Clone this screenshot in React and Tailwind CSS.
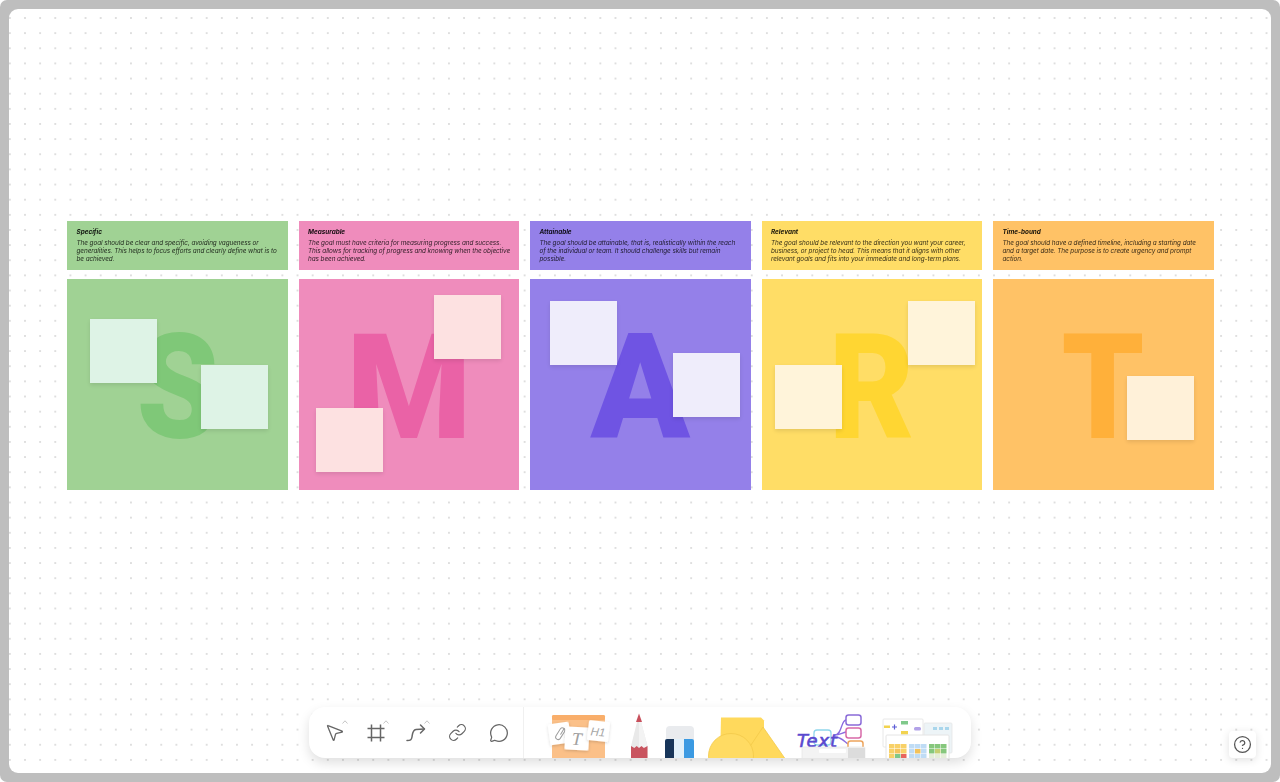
import React from "react";
import { MousePointer2, Link, MessageCircle, CircleHelp } from "lucide-react";

const font = { fontFamily: '"Inter","Liberation Sans",sans-serif' };

const columns = [
  { title: "Specific", lines: ["The goal should be clear and specific, avoiding vagueness or", "generalities. This helps to focus efforts and clearly define what is to", "be achieved."], bg: "bg-[#a0d294]", fg: "text-[#7fc878] scale-x-90", note: "bg-[#def3e6]", letter: "S", notes: ["left-[23px] top-[40px]", "left-[134px] top-[86px]"] },
  { title: "Measurable", lines: ["The goal must have criteria for measuring progress and success.", "This allows for tracking of progress and knowing when the objective", "has been achieved."], bg: "bg-[#ef8cbc]", fg: "text-[#ea62a6] scale-x-[0.98]", note: "bg-[#fde1e1]", letter: "M", notes: ["left-[135.5px] top-[16px]", "left-[17.5px] top-[129px]"] },
  { title: "Attainable", lines: ["The goal should be attainable, that is, realistically within the reach", "of the individual or team. It should challenge skills but remain", "possible."], bg: "bg-[#9480e9]", fg: "text-[#6f54e3] scale-x-100", note: "bg-[#efedfb]", letter: "A", notes: ["left-[20px] top-[22px]", "left-[143px] top-[74px]"] },
  { title: "Relevant", lines: ["The goal should be relevant to the direction you want your career,", "business, or project to head. This means that it aligns with other", "relevant goals and fits into your immediate and long-term plans."], bg: "bg-[#ffdd66]", fg: "text-[#ffd632] scale-x-90", note: "bg-[#fff4da]", letter: "R", notes: ["left-[146.5px] top-[22px]", "left-[13.5px] top-[86px]"] },
  { title: "Time-bound", lines: ["The goal should have a defined timeline, including a starting date", "and a target date. The purpose is to create urgency and prompt", "action."], bg: "bg-[#ffc266]", fg: "text-[#ffb03a] scale-x-90", note: "bg-[#fff1d9]", letter: "T", notes: ["left-[134px] top-[97px]"] },
];

function Caret({ className }) {
  return (
    <svg viewBox="0 0 6 4" className={"absolute w-[6px] h-[4px] " + className} fill="none" stroke="#b5b5b5" strokeWidth="0.8">
      <path d="M0.5 3.5 3 0.8 5.5 3.5" />
    </svg>
  );
}

function Column({ c }) {
  return (
    <div className="w-[220.5px] flex flex-col gap-[9px]">
      <div className={"h-[49px] pl-[9.5px] pt-[6.5px] text-[6.4px] leading-[8px] italic text-black/80 blur-[0.3px] whitespace-nowrap " + c.bg}>
        <div className="font-bold mb-[3px] text-black/90 tracking-[-0.02px]">{c.title}</div>
        {c.lines.map((l) => (
          <div key={l} className="tracking-[-0.07px]">{l}</div>
        ))}
      </div>
      <div className={"relative h-[211px] flex items-center justify-center overflow-hidden " + c.bg}>
        <span className={"text-[146px] leading-none font-black pt-[9px] " + c.fg} style={{ fontFamily: '"Roboto","Liberation Sans",sans-serif' }}>{c.letter}</span>
        {c.notes.map((n) => (
          <div key={n} className={"absolute w-[67px] h-[64px] shadow-[0_2px_4px_rgba(0,0,0,0.1)] " + c.note + " " + n} />
        ))}
      </div>
    </div>
  );
}

function Sticky() {
  return (
    <svg viewBox="545 707 70 51" className="w-[70px] h-[51px] ml-[20px] shrink-0">
      <defs>
        <filter id="cardShadow" x="-30%" y="-30%" width="160%" height="160%">
          <feDropShadow dx="0" dy="1" stdDeviation="1.500" floodColor="#000" floodOpacity="0.18" />
        </filter>
      </defs>
      <rect x="553" y="715" width="53" height="45" rx="1.500" fill="#fbc088" />
      <rect x="553" y="715" width="53" height="5" rx="1.500" fill="#f9ae6a" />
      <g transform="rotate(-8 560 733)" filter="url(#cardShadow)">
        <rect x="550" y="723" width="21" height="21" rx="1.500" fill="#fff" />
      </g>
      <g transform="rotate(-8 560 733)" fill="none" stroke="#9d9d9d" strokeWidth="1" strokeLinecap="round">
        <path d="M556.500 735.500l5.500-6.500a2.500 2.500 0 0 1 3.800 3.200l-5.500 6.500a2.500 2.500 0 0 1-3.800-3.200z" />
        <path d="M561.500 734.500l4-5" />
      </g>
      <g transform="rotate(3 578 738)" filter="url(#cardShadow)">
        <rect x="566" y="727" width="24" height="23" rx="1.500" fill="#fff" />
      </g>
      <text x="578" y="745" textAnchor="middle" fontSize="18" fontFamily="Liberation Serif, serif" fill="#a0a0a0" fontStyle="italic" transform="rotate(3 578 738)">T</text>
      <g transform="rotate(6 599 731)" filter="url(#cardShadow)">
        <rect x="589" y="721" width="21" height="20" rx="1.500" fill="#fff" />
      </g>
      <text x="599" y="736" textAnchor="middle" fontSize="11.500" fontFamily="Liberation Sans, sans-serif" fill="#a5a5a5" fontStyle="italic" transform="rotate(6 599 731)">H1</text>
    </svg>
  );
}

function Pencil() {
  return (
    <svg viewBox="628 707 24 51" className="w-[24px] h-[51px] ml-[13px] shrink-0">
      <path d="M640 714 648.500 746V760H632V746Z" fill="#e9e9e9" />
      <path d="M640 714 648.500 746V760H640Z" fill="#f3f3f3" />
      <path d="M640 713.500 643 722H637Z" fill="#c8505c" />
      <path d="M632 746l3.300 2 2.400-2 2.300 2 2.500-2 2.400 2 3.600-2V760H632Z" fill="#c9545f" />
    </svg>
  );
}

function Eraser() {
  return (
    <svg viewBox="662 707 38 51" className="w-[38px] h-[51px] ml-[10px] shrink-0">
      <path d="M667 730a4 4 0 0 1 4-4h20a4 4 0 0 1 4 4v11h-28z" fill="#e9ebee" />
      <rect x="666" y="739" width="29" height="20" rx="2" fill="#e2f1fa" />
      <path d="M668 739h7v20h-9v-18a2 2 0 0 1 2-2z" fill="#17355a" />
      <path d="M685 739h8a2 2 0 0 1 2 2v18h-10z" fill="#3b9ae2" />
    </svg>
  );
}

function Shapes() {
  return (
    <svg viewBox="706 707 84 51" className="w-[84px] h-[51px] ml-[6px] shrink-0">
      <path d="M722 717.500h40l3 3v40h-44z" fill="#ffd95c" />
      <path d="M764 727 787 760H742Z" fill="#ffd95c" stroke="#f2c94a" strokeWidth="0.8" />
      <circle cx="732" cy="756" r="22.500" fill="#ffdb63" stroke="#f2c94a" strokeWidth="0.8" />
    </svg>
  );
}

function MindMap() {
  return (
    <svg viewBox="795 707 75 51" className="w-[75px] h-[51px] ml-[5px] shrink-0">
      <rect x="815" y="730" width="17" height="15" rx="3" fill="none" stroke="#8fd6ec" strokeWidth="1.300" />
      <path d="M836 735c7 0 6-15 11-15M836 735c4 0 7-2 11-3M836 737c6 0 9 4 13 7" fill="none" stroke="#8a6be0" strokeWidth="1.300" />
      <rect x="847" y="715" width="15" height="10" rx="2.500" fill="#fff" stroke="#8a6bd8" strokeWidth="1.500" />
      <rect x="847" y="728" width="15" height="10" rx="2.500" fill="#fff" stroke="#d76aa8" strokeWidth="1.500" />
      <rect x="849" y="741" width="15" height="10" rx="2.500" fill="#fff" stroke="#eda45c" strokeWidth="1.500" />
      <text x="798" y="747" fontSize="18" fontWeight="400" fontStyle="italic" fontFamily="DejaVu Sans, sans-serif" fill="#5a49cf" stroke="#5a49cf" strokeWidth="0.6" textLength="40" lengthAdjust="spacing">Text</text>
      <rect x="803" y="747" width="63" height="14" rx="1" fill="#f3f3f3" stroke="#e2e2e2" strokeWidth="0.6" />
      <rect x="820" y="749" width="27" height="4" rx="1" fill="#fff" />
      <rect x="849" y="748" width="17" height="13" fill="#dcdcdc" />
    </svg>
  );
}

function Grid({ x, y, colors }) {
  const cells = [];
  for (let r = 0; r < 3; r++) {
    for (let k = 0; k < 3; k++) {
      cells.push(<rect key={r + "-" + k} x={x + k * 6} y={y + r * 5} width="5.500" height="4.500" fill={colors[(r * 3 + k) % colors.length]} />);
    }
  }
  return <g>{cells}</g>;
}

function Templates() {
  return (
    <svg viewBox="880 707 80 51" className="w-[80px] h-[51px] ml-[10px] shrink-0">
      <rect x="925" y="723" width="28" height="30" rx="1" fill="#edf4f7" stroke="#e6e6e6" strokeWidth="0.8" />
      <rect x="934" y="727" width="4" height="3" fill="#a9d6ec" />
      <rect x="940" y="727" width="4" height="3" fill="#a9d6ec" />
      <rect x="946" y="727" width="4" height="3" fill="#a9d6ec" />
      <rect x="884" y="719" width="40" height="28" rx="1" fill="#fff" stroke="#e8e8e8" strokeWidth="1" />
      <rect x="885" y="725.500" width="6" height="2.500" fill="#f2d34f" />
      <path d="M893 727h5M895.500 724.500v5" stroke="#5b5bd6" strokeWidth="1.200" />
      <rect x="902" y="721" width="7" height="3.500" fill="#80c98b" />
      <rect x="902" y="731" width="7" height="3.500" fill="#f2d34f" />
      <rect x="915" y="727" width="7" height="3.500" rx="1.500" fill="#b2a2e8" />
      <rect x="887" y="735" width="63" height="26" rx="1" fill="#ffffff" stroke="#e4e4e4" strokeWidth="1" />
      <Grid x={890} y={744} colors={["#f8d168", "#f8d168", "#f8d168", "#f8d168", "#f4c35c", "#f8d168", "#f8d168", "#7fc78a", "#e8655c"]} />
      <Grid x={910} y={744} colors={["#bfdcf5", "#bfdcf5", "#bfdcf5", "#bfdcf5", "#f2c25c", "#bfdcf5", "#bfdcf5", "#bfdcf5", "#bfdcf5"]} />
      <Grid x={930} y={744} colors={["#86c77d", "#86c77d", "#86c77d", "#86c77d", "#c5cf72", "#86c77d", "#e4edd8", "#e4edd8", "#e4edd8"]} />
    </svg>
  );
}

function Tool({ children }) {
  return <div className="w-[41px] shrink-0 flex items-center justify-center">{children}</div>;
}

export default function App() {
  return (
    <div className="w-[1280px] h-[782px] overflow-hidden bg-white" style={font}>
      <div className="w-full h-full rounded-[7px] bg-[#bebebe] p-[9px]">
        <div className="relative w-full h-full rounded-[9px] overflow-hidden bg-white bg-[radial-gradient(circle,#dedede_0.7px,transparent_1px)] bg-[size:15.15px_15.15px] bg-[position:8.425px_1.425px] pt-[212px] pl-[58px]">
          <div className="flex gap-[11px]">
            {columns.map((c) => (
              <Column key={c.title} c={c} />
            ))}
          </div>

          <div className="absolute left-[300px] top-[698px] w-[662px] h-[51px] rounded-[16px] bg-white shadow-[0_5px_12px_rgba(0,0,0,0.13)] overflow-hidden flex items-stretch">
            <div className="relative w-[215px] shrink-0 border-r border-[#f0f0f0] flex items-stretch pl-[5px] text-[#666666]">
              <Tool><MousePointer2 size={21} strokeWidth={1.500} /></Tool>
              <Tool>
                <svg viewBox="0 0 20 20" className="w-[20px] h-[20px]" fill="none" stroke="#666666" strokeWidth="1.500">
                  <path d="M5.500 1.500v17M14.500 1.500v17M1.500 5.500h17M1.500 14.500h17" />
                </svg>
              </Tool>
              <Tool>
                <svg viewBox="0 0 21 21" className="w-[21px] h-[21px]" fill="none" stroke="#666666" strokeWidth="1.500" strokeLinecap="round" strokeLinejoin="round">
                  <path d="M1 18.500c3.500 0 4.500-.5 5-3.500.5-3 .5-7 4-7.500 2.500-.3 5.500-.5 8-.5" />
                  <path d="M14.500 3 18.500 7 14.500 11" />
                </svg>
              </Tool>
              <Tool><Link size={19} strokeWidth={1.500} /></Tool>
              <Tool><MessageCircle size={20} strokeWidth={1.500} /></Tool>
              <Caret className="left-[33px] top-[13px]" />
              <Caret className="left-[74px] top-[13px]" />
              <Caret className="left-[115px] top-[13px]" />
            </div>
            <Sticky />
            <Pencil />
            <Eraser />
            <Shapes />
            <MindMap />
            <Templates />
          </div>

          <div className="absolute left-[1220px] top-[722px] w-[27px] h-[27px] rounded-[4px] bg-white shadow-[0_2px_8px_rgba(0,0,0,0.12)] flex items-center justify-center text-[#555555]">
            <CircleHelp size={19} strokeWidth={1.600} />
          </div>
        </div>
      </div>
    </div>
  );
}
